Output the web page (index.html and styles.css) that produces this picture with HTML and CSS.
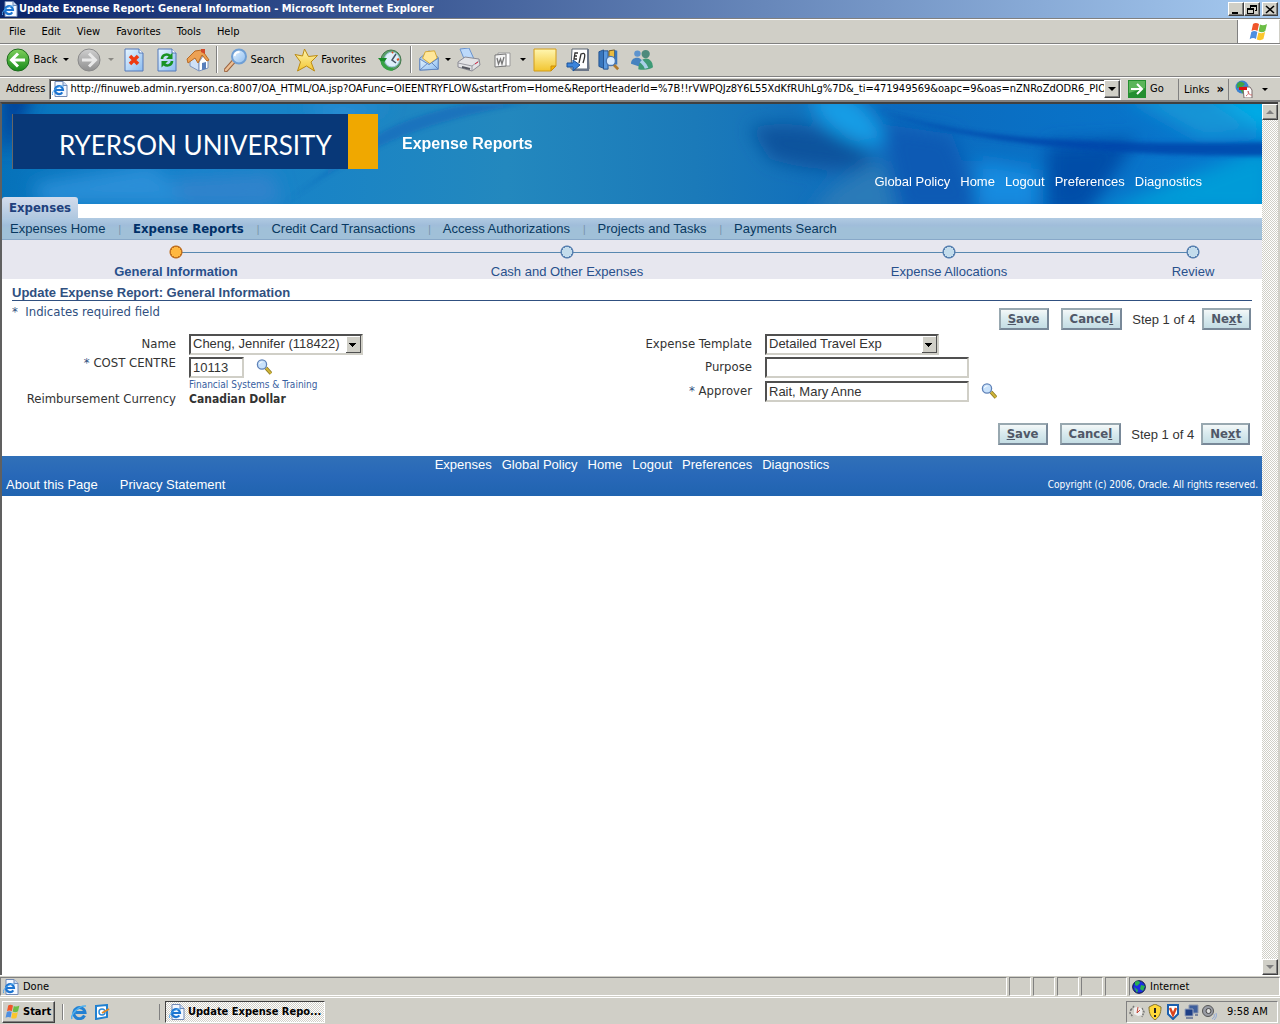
FILE: index.html
```html
<!DOCTYPE html>
<html lang="en">
<head>
<meta charset="utf-8">
<title>Update Expense Report: General Information</title>
<link rel="stylesheet" href="styles.css">
</head>
<body>
<svg class="defs" aria-hidden="true">
  <defs>
    <linearGradient id="sky" x1="0" y1="0" x2="1" y2="1"><stop offset="0" stop-color="#e8f6ff"/><stop offset="1" stop-color="#8cbcf0"/></linearGradient>
    <linearGradient id="lime" x1="0" y1="0" x2="0" y2="1"><stop offset="0" stop-color="#7fd05c"/><stop offset="1" stop-color="#168a1a"/></linearGradient>
    <linearGradient id="silver" x1="0" y1="0" x2="0" y2="1"><stop offset="0" stop-color="#cfcfcf"/><stop offset="1" stop-color="#8f8f8f"/></linearGradient>
    <linearGradient id="gold" x1="0" y1="0" x2="0" y2="1"><stop offset="0" stop-color="#fff6b0"/><stop offset="1" stop-color="#f2c530"/></linearGradient>
    <symbol id="ie" viewBox="0 0 16 16"><path d="M3 .5h8l4 4v11H3z" fill="#f4f8ff" stroke="#7089b5"/><path d="M11 .5v4h4" fill="#c9daf5" stroke="#7089b5"/><path d="M10.300 11.300A4 4 0 1 1 11 9H3" fill="none" stroke="#1c74d0" stroke-width="2.200"/><path d="M.5 14C-1 10 7 4 12 5" fill="none" stroke="#4fa6ee"/></symbol>
    <symbol id="ieball" viewBox="0 0 16 16"><path d="M13.500 11.500A5.600 5.600 0 1 1 14 8.500H4.500" fill="none" stroke="#2280d2" stroke-width="3"/><path d="M1 15C-1 11 8 1 15 2" fill="none" stroke="#4fb0ee" stroke-width="1.500"/></symbol>
    <symbol id="flag" viewBox="0 0 20 20"><path d="M4 2c2-1.500 4-1.200 6 0L8.500 9C6.500 7.800 4.500 7.800 2.500 9z" fill="#f0562a"/><path d="M11 2.500c2 1 4.300 1 7-.5L16.300 9c-2.200 1.500-4.500 1.500-6.700.3z" fill="#6cbd45"/><path d="M2.300 10c2-1.300 4-1.200 6 0L7 17c-2-1.200-4-1.200-6.300.2z" fill="#4d8fe0"/><path d="M9.400 10.400c2.300 1.200 4.500 1 6.700-.3l-1.700 7c-2.200 1.500-4.300 1.400-6.600.3z" fill="#fbc62c"/></symbol>
    <symbol id="back" viewBox="0 0 24 24"><circle cx="12" cy="12" r="11" fill="url(#lime)" stroke="#1e6a1e"/><path d="M12 5.500L5.500 12l6.500 6.500M6.500 12H19" fill="none" stroke="#fff" stroke-width="3"/></symbol>
    <symbol id="forward" viewBox="0 0 24 24"><circle cx="12" cy="12" r="11" fill="url(#silver)" stroke="#8a8a8a"/><path d="M12 5.500l6.500 6.500-6.500 6.500M17.500 12H5" fill="none" stroke="#e9e9e9" stroke-width="3"/></symbol>
    <symbol id="stop" viewBox="0 0 20 24"><path d="M1 1h14l4 4v18H1z" fill="url(#sky)" stroke="#5579b8"/><path d="M15 1v4h4" fill="#fff" stroke="#5579b8"/><path d="M6 8l8 8M14 8l-8 8" stroke="#ee3a12" stroke-width="3.500"/></symbol>
    <symbol id="refresh" viewBox="0 0 20 24"><path d="M1 1h14l4 4v18H1z" fill="url(#sky)" stroke="#5579b8"/><path d="M15 1v4h4" fill="#fff" stroke="#5579b8"/><path d="M5 11c0-4 5-6 8-3M15 13c0 4-5 6-8 3" fill="none" stroke="#189222" stroke-width="2.600"/><path d="M15.500 4.500v6.500H9zM4.500 19.500V13H11z" fill="#189222"/></symbol>
    <symbol id="home" viewBox="0 0 24 24"><path d="M4 12l4-4 5 6v9l-9-5z" fill="#cfe0f6" stroke="#7d93bd"/><path d="M13 14l4-6 5 4v8l-9 3z" fill="#fff" stroke="#7d93bd"/><path d="M1 11L9 3l7-1 7 10-2 1-5-6-4 8-3-5-7 5z" fill="#eda153" stroke="#b86a24"/><path d="M15 1h4v5l-4-2z" fill="#d34a2a"/><path d="M16 15l4-1v7l-4 1z" fill="#597fbb"/></symbol>
    <symbol id="search" viewBox="0 0 24 24"><path d="M2 22l8-9" stroke="#9a6340" stroke-width="4.500" stroke-linecap="round"/><path d="M2 22l8-9" stroke="#ecbf94" stroke-width="2.500" stroke-linecap="round"/><circle cx="15" cy="8.500" r="7" fill="url(#sky)" stroke="#6f9fd4" stroke-width="2"/><path d="M10.500 8c.5-3 3-4 5-4" fill="none" stroke="#fff" stroke-width="2"/></symbol>
    <symbol id="star" viewBox="0 0 24 24"><path d="M10.500 1l4 7.500 9-1-6.500 6.500 3.500 9-8-5-9 5 3-9L1 6.500l7.500 1.500z" fill="url(#gold)" stroke="#bb8a12"/></symbol>
    <symbol id="history" viewBox="0 0 24 24"><circle cx="13" cy="12" r="10" fill="#5aa06a" stroke="#47784f"/><circle cx="14" cy="11.500" r="7.500" fill="#dff0fa" stroke="#9cc3dc"/><path d="M18 6l-4 6 4 3" fill="none" stroke="#456" stroke-width="1.500"/><path d="M0 10h9l-4 6z" fill="#148a26"/><path d="M4 13c1 6 6 9 11 8" fill="none" stroke="#36a345" stroke-width="3"/><path d="M19 12l2-1M14 5l1-1" stroke="#dd4d20" stroke-width="2"/></symbol>
    <symbol id="mail" viewBox="0 0 24 24"><path d="M2 10L12 2l10 7v13L2 23z" fill="#a9cdf4" stroke="#5f83bc"/><path d="M5 10l3-7 10-1 3 8-8 6z" fill="#ffe79a" stroke="#d5a52c"/><path d="M2 11l10 6 10-7v12L2 23z" fill="url(#sky)" stroke="#5f83bc"/><path d="M2 23l8-7M22 22l-7-7" stroke="#5f83bc"/></symbol>
    <symbol id="print" viewBox="0 0 24 24"><path d="M3 1l9-1 5 11-9 2z" fill="#bcd9fa" stroke="#6b94ce"/><path d="M1 14l7-5 14 2 1 6-8 6-14-4z" fill="#e3e3e6" stroke="#8b8b94"/><path d="M1 15l14 3 8-6M15 18v5" fill="none" stroke="#9a9aa2"/><path d="M5 19l8 2" stroke="#55575f" stroke-width="2"/><path d="M18 16l3-2" stroke="#d24" stroke-width="1"/></symbol>
    <symbol id="word" viewBox="0 0 18 18"><path d="M5 2h12v13H5z" fill="#fff" stroke="#9a9a9a"/><path d="M2 4l11-1v12l-11 1z" fill="#f5f5f5" stroke="#777"/><path d="M4 7l1.500 6L7.500 8l1.500 5 2-7" fill="none" stroke="#777" stroke-width="1.300"/></symbol>
    <symbol id="note" viewBox="0 0 24 24"><path d="M1 1h22v17l-5 5H1z" fill="url(#gold)" stroke="#d29c1a"/><path d="M23 18h-5v5z" fill="#f7b500" stroke="#c68c10"/></symbol>
    <symbol id="en" viewBox="0 0 24 24"><path d="M6 1h16l1 20H5z" fill="#fff" stroke="#5c6673"/><path d="M22 1v21H8" fill="none" stroke="#6b7688" stroke-width="2"/><path d="M12 5H9L8 11h3M9 8h2M13 15l2-9c4-2 5 0 2 9" fill="none" stroke="#333" stroke-width="1.300"/><path d="M1 15h6v-3l7 5-7 6v-4H1z" fill="#3c85dc" stroke="#1b5298"/></symbol>
    <symbol id="books" viewBox="0 0 24 24"><path d="M1 3l5-2v20l-5-2z" fill="#3776bd" stroke="#22528f"/><path d="M6 2h5v20H6z" fill="#5a9ae0" stroke="#22528f"/><path d="M12 2l6-1v17h-6z" fill="#ecbd40" stroke="#6d5520"/><path d="M18 1l3 1v15h-3z" fill="#3776bd"/><path d="M17 17l5 5" stroke="#b07a2c" stroke-width="3"/><circle cx="14" cy="13" r="5" fill="#d8ecff" stroke="#4a77b2" stroke-width="1.500"/></symbol>
    <symbol id="people" viewBox="0 0 24 24"><circle cx="7" cy="5" r="3.500" fill="#5d94ce"/><path d="M0 16c0-8 12-9 13 0l-4 3z" fill="#4682bf"/><circle cx="16" cy="5.500" r="4.500" fill="#4d8a7c"/><path d="M8 22c0-14 15-16 16-2-3 3-12 3-16 2z" fill="#3e9a76"/><path d="M11 13c2 2 5 4 6 8" stroke="#a9d0e8" stroke-width="4"/></symbol>
    <symbol id="go" viewBox="0 0 18 18"><path d="M0 0h18v18H0z" fill="#248f30"/><path d="M1 1h16v7L1 13z" fill="#5bb55a"/><path d="M9 4l5 5-5 5M13 9H3" fill="none" stroke="#fff" stroke-width="2"/></symbol>
    <symbol id="pdf" viewBox="0 0 18 18"><circle cx="7" cy="7" r="6.500" fill="#3b82d0"/><path d="M2 4c3-4 6-2 8 0l-3 3-5 1zM5 9l6 2-3 3z" fill="#3fa344"/><path d="M8 7h7l2 3v8H9z" fill="#fff" stroke="#7a6c6c"/><path d="M4 7h8v3H4z" fill="#d11"/><path d="M11 16c3-2 3-4 2-5 0 3 2 4 4 4" fill="none" stroke="#c66"/></symbol>
    <symbol id="lens" viewBox="0 0 16 16"><path d="M10 9l5 5.500" stroke="#8a7722" stroke-width="3.600"/><path d="M10 9l5 5.500" stroke="#cfb53a" stroke-width="2"/><circle cx="6" cy="5.500" r="4.600" fill="#c9e2fb" stroke="#5f82b8" stroke-width="1.300"/><path d="M3.500 5c.5-2 2-2 3-2" stroke="#fff" fill="none"/></symbol>
    <symbol id="globe" viewBox="0 0 14 14"><circle cx="7" cy="7" r="6.300" fill="#1d2ee0" stroke="#0a1238"/><path d="M3 2c3-2 5-1 5 1L5 6 3 5zM9 5l4 1-2 5-3-2zM2 7l4 3-1 3z" fill="#28b050"/></symbol>
    <symbol id="outlook" viewBox="0 0 16 16"><path d="M2 2l11-1v12l-11 2z" fill="#fff" stroke="#2080d0" stroke-width="2"/><circle cx="8" cy="8" r="3" fill="none" stroke="#2b8ada" stroke-width="1.500"/><path d="M8 9l7-4" stroke="#e48a25" stroke-width="2"/></symbol>
    <symbol id="gauge" viewBox="0 0 16 16"><path d="M2 5l-1 4 3 4M5 2l-3 4M13 4l2 4-2 5" fill="none" stroke="#777" stroke-width="1.500" stroke-dasharray="2 1"/><path d="M5 4c3-2 6-1 8 1v6l-4 1-4-2z" fill="#eee"/><path d="M8 9l1-6M8 9l3-3" stroke="#c74a3a"/></symbol>
    <symbol id="shield" viewBox="0 0 16 16"><path d="M8 0l6 3c0 7-2 10-6 13C4 13 2 10 2 3z" fill="#ffd839" stroke="#837231"/><path d="M8 4v5" stroke="#222" stroke-width="2"/><path d="M8 11v2" stroke="#222" stroke-width="2"/></symbol>
    <symbol id="vee" viewBox="0 0 16 16"><path d="M3 1h10v9l-5 5-5-5z" fill="#fff" stroke="#1b5fae" stroke-width="2"/><path d="M5 4l3 7 3-7" fill="none" stroke="#d8431d" stroke-width="2.400"/></symbol>
    <symbol id="net" viewBox="0 0 16 16"><path d="M6 1h9v8H6z" fill="#3f5f9c" stroke="#8d97ae"/><path d="M2 5h8v7H2z" fill="#1e3f86" stroke="#9aa5bd"/><path d="M3 14h7M12 11h3" stroke="#7a859e" stroke-width="2"/></symbol>
    <symbol id="speaker" viewBox="0 0 16 16"><circle cx="7" cy="7" r="5.500" fill="#999ca4" stroke="#555"/><circle cx="7.500" cy="7" r="2.500" fill="#ddd" stroke="#444"/><path d="M13 10c1 2 0 4-2 5M15 9c1 3 0 5-2 7" stroke="#8fa8d5" fill="none"/></symbol>
  </defs>
</svg>

<header class="titlebar">
  <svg class="i16"><use href="#ie"/></svg>
  <h1>Update Expense Report: General Information - Microsoft Internet Explorer</h1>
  <button class="winbtn" aria-label="Minimize"><svg viewBox="0 0 10 9"><path d="M1 7h6v2H1z"/></svg></button>
  <button class="winbtn" aria-label="Restore"><svg viewBox="0 0 10 9"><path d="M3 0h7v6H8V5h1V2H4v1H3zM0 3h7v6H0zM1 5v3h5V5z" fill-rule="evenodd"/></svg></button>
  <button class="winbtn close" aria-label="Close"><svg viewBox="0 0 10 9"><path d="M1 1l8 7M9 1L1 8" stroke="#000" stroke-width="1.600"/></svg></button>
</header>

<nav class="menubar" aria-label="Menu">
  <button>File</button><button>Edit</button><button>View</button><button>Favorites</button><button>Tools</button><button>Help</button>
  <span class="throbber"><svg><use href="#flag"/></svg></span>
</nav>

<div class="toolbar" role="toolbar">
  <button><svg class="i24"><use href="#back"/></svg>Back</button>
  <button class="caret" aria-label="Back list"></button>
  <button aria-label="Forward"><svg class="i24"><use href="#forward"/></svg></button>
  <button class="caret dim" aria-label="Forward list"></button>
  <button aria-label="Stop"><svg class="doc"><use href="#stop"/></svg></button>
  <button aria-label="Refresh"><svg class="doc"><use href="#refresh"/></svg></button>
  <button aria-label="Home"><svg class="i24"><use href="#home"/></svg></button>
  <span class="sep"></span>
  <button><svg class="i24"><use href="#search"/></svg>Search</button>
  <button><svg class="i24"><use href="#star"/></svg>Favorites</button>
  <button aria-label="History"><svg class="i24"><use href="#history"/></svg></button>
  <span class="sep"></span>
  <button aria-label="Mail"><svg class="i22"><use href="#mail"/></svg></button>
  <button class="caret" aria-label="Mail list"></button>
  <button aria-label="Print"><svg class="i24"><use href="#print"/></svg></button>
  <button aria-label="Edit"><svg class="i18"><use href="#word"/></svg></button>
  <button class="caret" aria-label="Edit list"></button>
  <button aria-label="Notes"><svg class="i24"><use href="#note"/></svg></button>
  <button aria-label="Translate"><svg class="i24"><use href="#en"/></svg></button>
  <button aria-label="Research"><svg class="i22"><use href="#books"/></svg></button>
  <button aria-label="Messenger"><svg class="i22"><use href="#people"/></svg></button>
</div>

<div class="addressbar">
  <label for="url">Address</label>
  <div class="urlbox">
    <svg class="i16"><use href="#ie"/></svg>
    <input id="url" type="text" value="http://finuweb.admin.ryerson.ca:8007/OA_HTML/OA.jsp?OAFunc=OIEENTRYFLOW&amp;startFrom=Home&amp;ReportHeaderId=%7B!!rVWPQJz8Y6L55XdKfRUhLg%7D&amp;_ti=471949569&amp;oapc=9&amp;oas=nZNRoZdODR6_PIO4">
    <button class="drop" aria-label="Address list"></button>
  </div>
  <button class="go"><svg class="i18"><use href="#go"/></svg>Go</button>
  <div class="links">Links <b>»</b></div>
  <div class="pdf"><svg class="i18"><use href="#pdf"/></svg><button class="caret" aria-label="PDF options"></button></div>
</div>

<div class="viewport">
  <main class="page">
    <div class="banner">
      <svg class="art" viewBox="0 0 1260 100" preserveAspectRatio="none" aria-hidden="true">
        <defs>
          <linearGradient id="sea"><stop offset="0" stop-color="#0672ba"/><stop offset=".15" stop-color="#1381cb"/><stop offset=".4" stop-color="#2388be"/><stop offset=".55" stop-color="#1b7ab9"/><stop offset=".7" stop-color="#0c6abd"/><stop offset="1" stop-color="#0679d0"/></linearGradient>
          <filter id="soft" x="-30%" y="-50%" width="160%" height="200%"><feGaussianBlur stdDeviation="9"/></filter>
          <filter id="fine" x="-10%" y="-30%" width="120%" height="160%"><feGaussianBlur stdDeviation="2"/></filter>
        </defs>
        <path d="M0 0h1260v100H0z" fill="url(#sea)"/>
        <g filter="url(#soft)">
          <path d="M0 -20h34L8 46H0z" fill="#003f98"/>
          <path d="M300 0h90l-50 20zM30 80l120-20 40 40H40z" fill="#2a8fd8"/>
          <path d="M170 75l100-5 10 30H180z" fill="#3383cc"/>
          <path d="M748 24c40-10 90 0 120 26 10 22-60 18-100 5z" fill="#0f539d"/>
          <path d="M806 -10h40c24 14 38 36 34 52-34 0-66-20-74-52z" fill="#129de6"/>
          <path d="M830 84l50-30 16 60h-90z" fill="#2a7ab8"/>
          <path d="M880 20l70 10 30 80h-80z" fill="#0a5ab4"/>
          <path d="M975 56l60 10v40h-60z" fill="#128be0"/>
          <path d="M1045 40l90-5-50 75h-40z" fill="#064ea8"/>
          <path d="M1120 -10h140v40l-60 5z" fill="#1594d6"/>
          <path d="M1205 -10h70v46z" fill="#00ace6"/>
          <path d="M1090 110l90-36 90-34v70z" fill="#009bd8"/>
        </g>
        <g filter="url(#fine)">
          <path d="M275 104c60-40 120-85 250-104h-60c-100 20-110 50-190 104z" fill="#125fba" opacity=".5"/>
          <path d="M876 6c80 26 180 36 394 32v14c-150 0-300-10-394-46z" fill="#0046aa" opacity=".85"/>
        </g>
      </svg>
      <div class="logo"><span>RYERSON UNIVERSITY</span></div>
      <h2>Expense Reports</h2>
      <nav class="global" aria-label="Global">
        <a href="#">Global Policy</a><a href="#">Home</a><a href="#">Logout</a><a href="#">Preferences</a><a href="#">Diagnostics</a>
      </nav>
    </div>
    <div class="tabs"><a href="#">Expenses</a></div>
    <nav class="subtabs" aria-label="Expenses">
      <a href="#">Expenses Home</a><a href="#" class="on">Expense Reports</a><a href="#">Credit Card Transactions</a><a href="#">Access Authorizations</a><a href="#">Projects and Tasks</a><a href="#">Payments Search</a>
    </nav>
    <ol class="train">
      <li class="on">General Information</li><li>Cash and Other Expenses</li><li>Expense Allocations</li><li>Review</li>
    </ol>
    <form>
      <h3>Update Expense Report: General Information</h3>
      <div class="row">
        <p class="required">*&nbsp; Indicates required field</p>
        <div class="actions">
          <button type="button"><u>S</u>ave</button><button type="button">Cance<u>l</u></button><span>Step 1 of 4</span><button type="button">Ne<u>x</u>t</button>
        </div>
      </div>
      <div class="fields">
        <div class="col left">
          <label for="name">Name</label>
          <div><select id="name"><option>Cheng, Jennifer (118422)</option></select></div>
          <label for="cc" class="high"><i>*</i> COST CENTRE</label>
          <div><input id="cc" class="short" type="text" value="10113"><button type="button" class="lov" aria-label="Search cost centre"><svg class="i16"><use href="#lens"/></svg></button></div>
          <p class="hint">Financial Systems &amp; Training</p>
          <span class="label">Reimbursement Currency</span>
          <strong>Canadian Dollar</strong>
        </div>
        <div class="col right">
          <label for="tpl">Expense Template</label>
          <div><select id="tpl"><option>Detailed Travel Exp</option></select></div>
          <label for="purpose">Purpose</label>
          <div><input id="purpose" type="text"></div>
          <label for="appr"><i>*</i> Approver</label>
          <div><input id="appr" type="text" value="Rait, Mary Anne"><button type="button" class="lov" aria-label="Search approver"><svg class="i16"><use href="#lens"/></svg></button></div>
        </div>
      </div>
      <div class="actions bottom">
        <button type="button"><u>S</u>ave</button><button type="button">Cance<u>l</u></button><span>Step 1 of 4</span><button type="button">Ne<u>x</u>t</button>
      </div>
    </form>
    <footer>
      <nav aria-label="Footer"><a href="#">Expenses</a><a href="#">Global Policy</a><a href="#">Home</a><a href="#">Logout</a><a href="#">Preferences</a><a href="#">Diagnostics</a></nav>
      <div class="legal"><a href="#">About this Page</a><a href="#">Privacy Statement</a><small>Copyright (c) 2006, Oracle. All rights reserved.</small></div>
    </footer>
  </main>
  <div class="scrollbar"><button aria-label="Scroll up" class="up"></button><button aria-label="Scroll down" class="down"></button></div>
</div>

<div class="status">
  <div class="pane grow"><svg class="i16"><use href="#ie"/></svg>Done</div>
  <div class="pane"></div><div class="pane"></div><div class="pane"></div><div class="pane"></div><div class="pane"></div>
  <div class="pane zone"><svg class="i14"><use href="#globe"/></svg>Internet</div>
</div>

<div class="taskbar">
  <button class="start"><svg class="i16"><use href="#flag"/></svg>Start</button>
  <div class="quick">
    <a href="#" aria-label="Internet Explorer"><svg class="i16"><use href="#ieball"/></svg></a>
    <a href="#" aria-label="Outlook"><svg class="i16"><use href="#outlook"/></svg></a>
  </div>
  <button class="task"><svg class="i16"><use href="#ie"/></svg>Update Expense Repo...</button>
  <div class="tray">
    <svg class="i16"><use href="#gauge"/></svg><svg class="i16"><use href="#shield"/></svg><svg class="i16"><use href="#vee"/></svg><svg class="i16"><use href="#net"/></svg><svg class="i16"><use href="#speaker"/></svg>
    <time>9:58 AM</time>
  </div>
</div>
</body>
</html>
```
FILE: styles.css
```css
* { box-sizing: border-box; }

body {
  margin: 0;
  min-height: 100vh;
  display: flex;
  flex-direction: column;
  background: #d0cfc7;
  color: #000;
  font: 11px/14px "DejaVu Sans Condensed", "DejaVu Sans", sans-serif;
}

h1, h2, h3, p, ol { margin: 0; padding: 0; font-size: inherit; }
button { margin: 0; padding: 0; border: 0; background: none; font: inherit; color: inherit; }
a { color: inherit; text-decoration: none; }
svg { flex: none; display: block; }

.defs { position: absolute; width: 0; height: 0; }
.i14 { width: 14px; height: 14px; }
.i16 { width: 16px; height: 16px; }
.i18 { width: 18px; height: 18px; }
.i22 { width: 22px; height: 22px; }
.i24 { width: 24px; height: 24px; }
.doc { width: 20px; height: 24px; }

.caret::before, .drop::before {
  content: "";
  display: block;
  border: 3px solid transparent;
  border-top-color: #000;
  border-bottom: 0;
}
.drop::before { border-width: 4px 4px 0; }
.caret.dim::before { border-top-color: #8a8984; }

/* Window frame */
.titlebar {
  display: flex;
  align-items: center;
  height: 18px;
  padding: 0 2px;
  background: linear-gradient(90deg, #0a246a, #a6caf0);
  color: #fff;
}
.titlebar h1 { flex: 1; margin-left: 1px; font-weight: bold; }
.winbtn, .drop, .up, .down {
  display: flex;
  align-items: center;
  justify-content: center;
  width: 16px;
  height: 14px;
  background: #d0cfc7;
  border: 1px solid;
  border-color: #fff #404040 #404040 #fff;
  box-shadow: inset -1px -1px #808080;
}
.winbtn svg { width: 10px; height: 9px; }
.close { margin-left: 2px; }

.menubar {
  display: flex;
  align-items: center;
  height: 26px;
  padding-left: 9px;
  gap: 16px;
  border-top: 1px solid #808080;
  border-bottom: 1px solid #808080;
  box-shadow: inset 0 1px #fff;
}
.menubar button { padding-top: 2px; }
.throbber {
  display: flex;
  align-items: center;
  justify-content: center;
  align-self: stretch;
  width: 42px;
  margin: 1px 1px 0 auto;
  background: #fff;
  border-left: 1px solid #808080;
}
.throbber svg { width: 20px; height: 20px; }

.toolbar {
  display: grid;
  grid-template-columns: 56px 12px 34px 10px 36px 30px 32px 6px 68px 84px 36px 6px 30px 8px 34px 32px 10px 34px 32px 30px 36px;
  height: 33px;
  padding: 0 0 2px 4px;
  border-top: 1px solid #fff;
  border-bottom: 1px solid #808080;
}
.toolbar button { display: flex; align-items: center; justify-content: center; gap: 3px; }
.sep { width: 2px; margin: 1px auto; border-left: 1px solid #808080; border-right: 1px solid #fff; }

.addressbar {
  display: flex;
  align-items: center;
  height: 25px;
  padding-left: 6px;
  border-top: 1px solid #fff;
  border-bottom: 2px solid #808080;
}
.urlbox {
  flex: 1;
  min-width: 0;
  display: flex;
  align-items: center;
  height: 21px;
  margin-left: 4px;
  padding-left: 2px;
  background: #fff;
  border: 1px solid;
  border-color: #808080 #fff #fff #808080;
  box-shadow: inset 1px 1px #404040;
}
.urlbox input { flex: 1; min-width: 0; padding: 0 0 0 2px; border: 0; outline: 0; background: none; font: inherit; }
.drop { height: 18px; }
.go { display: flex; align-items: center; gap: 4px; width: 51px; height: 21px; margin-left: 7px; border-right: 1px solid #808080; }
.links { width: 44px; margin-left: 5px; white-space: nowrap; }
.links b { margin-left: 4px; font-size: 13px; }
.pdf { display: flex; align-items: center; gap: 9px; width: 52px; height: 21px; padding-left: 6px; border-left: 1px solid #808080; }

/* Browser viewport */
.viewport {
  flex: 1;
  display: flex;
  margin-right: 2px;
  border-top: 2px solid #404040;
  border-left: 2px solid #606060;
  background: #fff;
}
.page { flex: 1; min-width: 0; overflow: hidden; font: 13px/16px "Liberation Sans", Arial, sans-serif; }
.scrollbar {
  display: flex;
  flex-direction: column;
  justify-content: space-between;
  width: 16px;
  background: conic-gradient(#fff 25%, #d0cfc7 0 50%, #fff 0 75%, #d0cfc7 0) 0 0 / 2px 2px;
}
.up, .down { height: 16px; }
.up::before, .down::before { content: ""; border: 4px solid transparent; }
.up::before { border-top: 0; border-bottom-color: #808080; }
.down::before { border-bottom: 0; border-top-color: #808080; }

/* Banner */
.banner { position: relative; display: flex; height: 100px; padding: 10px 60px 0 10px; color: #fff; }
.art { position: absolute; inset: 0; width: 100%; height: 100%; }
.logo {
  position: relative;
  width: 366px;
  height: 55px;
  padding: 14px 0 0 46px;
  background: #083878;
  border-right: 30px solid #f0a800;
  border-left: 1px solid #666;
  font: 26px/34px Lato, sans-serif;
  white-space: nowrap;
}
.banner h2 { position: relative; margin: 20px 0 0 24px; font-size: 16px; line-height: 20px; }
.global { position: relative; display: flex; gap: 10px; align-self: flex-end; margin: 0 0 14px auto; }

.tabs { display: flex; height: 14px; }
.tabs a {
  position: relative;
  height: 21px;
  margin-top: -7px;
  padding: 2px 7px 0;
  border-radius: 3px 3px 0 0;
  background: linear-gradient(#d3dcec, #b0c8e0);
  color: #20407c;
  font: bold 13px/17px "DejaVu Sans Condensed", sans-serif;
}
.subtabs {
  display: flex;
  align-items: center;
  height: 22px;
  padding-left: 8px;
  background: linear-gradient(#b0cae2, #a0bdda 35%, #a0c0d8 50%);
  border-bottom: 1px solid #88a8c8;
  color: #083860;
}
.subtabs a + a::before { content: "|"; margin: 0 12px 0 13px; color: #7791a8; font: 10px "Liberation Sans", sans-serif; }
.subtabs .on { color: #003068; font: bold 13px/16px "DejaVu Sans Condensed", sans-serif; }

/* Step train */
.train {
  display: grid;
  grid-template-columns: 348fr 434fr 330fr 148fr;
  height: 39px;
  background: #e7e7ef;
  color: #28508c;
  text-align: center;
  list-style: none;
}
.train li {
  padding-top: 24px;
  background:
    radial-gradient(circle at 50% 12px, #c3dcec 5px, #5880b0 5px 6px, transparent 7px),
    linear-gradient(#5888b0, #5888b0) 0 12px / 100% 1px no-repeat;
}
.train li:first-child {
  background:
    radial-gradient(circle at 50% 12px, #ffb840 5px, #c07020 5px 6px, transparent 7px),
    linear-gradient(#5888b0, #5888b0) 100% 12px / 50% 1px no-repeat;
}
.train li:last-child {
  margin-right: -10px;
  background:
    radial-gradient(circle at 50% 12px, #c3dcec 5px, #5880b0 5px 6px, transparent 7px),
    linear-gradient(#5888b0, #5888b0) 0 12px / 50% 1px no-repeat;
}
.train .on { font-weight: bold; }

/* Form */
form { color: #333; }
h3 { margin: 0 10px; padding: 6px 0 0; border-bottom: 1px solid #305080; color: #305080; line-height: 15px; }
.row { display: flex; justify-content: space-between; padding: 2px 11px 0 10px; }
.required { color: #305080; font: 13px/18px "DejaVu Sans Condensed", sans-serif; }
.actions { display: flex; align-items: center; height: 22px; margin-top: 5px; font: 13px/16px "Liberation Sans", sans-serif; }
.actions button {
  height: 22px;
  padding: 0 7px;
  border: 2px solid;
  border-color: #98a8b0 #788898 #788898 #98a8b0;
  background: linear-gradient(#f4f8f8, #dcecf0 40%, #c4dde4);
  color: #505868;
  font: bold 13px/16px "DejaVu Sans Condensed", sans-serif;
}
.actions button + button { margin-left: 12px; }
.actions span { margin: 1px 7px 0 10px; }
.bottom { justify-content: flex-end; margin: 16px 12px 11px; }

.fields { display: grid; grid-template-columns: 576fr 684fr; padding-top: 3px; font: 13px/16px "DejaVu Sans Condensed", sans-serif; }
.col { display: grid; grid-template-columns: 174px 1fr; column-gap: 13px; align-content: start; align-items: center; }
.left { grid-template-rows: 22px 24px 12px 16px; }
.right { grid-template-rows: 22px 24px 24px; }
.col > div { display: flex; align-items: center; }
.col label, .label { text-align: right; }
.col .high { align-self: start; }
.col i { color: #305080; font-style: normal; }
.fields input, .fields select {
  width: 204px;
  height: 21px;
  padding: 0 2px;
  border: 2px solid;
  border-color: #505050 #d0cfc7 #d0cfc7 #505050;
  border-radius: 0;
  outline: 0;
  background: #fff;
  color: #333;
  font: 13px/16px "Liberation Sans", sans-serif;
}
.fields select {
  width: 174px;
  appearance: none;
  background:
    conic-gradient(from 315deg at 50% 100%, #000 90deg, transparent 0) right 5px top 7px / 7px 4px no-repeat,
    linear-gradient(#d0cfc7, #d0cfc7) right 1px top 1px / 13px 15px no-repeat,
    linear-gradient(#fff, #fff) right 1px top 0 / 14px 16px no-repeat,
    linear-gradient(#505050, #505050) right 0 top 0 / 15px 17px no-repeat,
    #fff;
}
.fields .short { width: 55px; }
.lov { margin-left: 12px; }
.hint { grid-column: 2; color: #3860a0; font: 10px/12px "DejaVu Sans Condensed", sans-serif; }
.col strong { font-size: 12px; }

footer { height: 40px; padding: 1px 4px 0; background: linear-gradient(#3070b8, #2868b8 50%, #2064b0); color: #fff; }
footer nav { display: flex; justify-content: center; gap: 10px; }
.legal { display: flex; align-items: center; gap: 22px; margin-top: 4px; }
.legal small { margin-left: auto; font: 10px/16px "DejaVu Sans Condensed", sans-serif; }

/* Status bar and taskbar */
.status { display: flex; gap: 2px; height: 22px; padding-top: 1px; border-top: 1px solid #fff; }
.pane {
  display: flex;
  align-items: center;
  gap: 4px;
  width: 22px;
  height: 19px;
  padding-left: 2px;
  border: 1px solid;
  border-color: #808080 #fff #fff #808080;
}
.grow { flex: 1; }
.zone { width: 151px; }
.taskbar { display: flex; align-items: center; height: 27px; padding: 1px 2px 0; border-top: 1px solid #fff; }
.start {
  display: flex;
  align-items: center;
  gap: 2px;
  width: 53px;
  height: 22px;
  padding-left: 2px;
  border: 1px solid;
  border-color: #fff #404040 #404040 #fff;
  box-shadow: inset -1px -1px #808080;
  font-weight: bold;
}
.quick {
  display: flex;
  gap: 7px;
  width: 98px;
  margin: 0 5px 0 7px;
  padding-left: 8px;
  border: solid #808080;
  border-width: 0 1px;
  box-shadow: inset 1px 0 #fff;
}
.task {
  display: flex;
  align-items: center;
  gap: 3px;
  width: 160px;
  height: 22px;
  padding-left: 3px;
  border: 1px solid;
  border-color: #404040 #fff #fff #404040;
  background: conic-gradient(#fff 25%, #d0cfc7 0 50%, #fff 0 75%, #d0cfc7 0) 0 0 / 2px 2px;
  font-weight: bold;
  white-space: nowrap;
}
.tray {
  display: flex;
  align-items: center;
  gap: 2px;
  width: 152px;
  height: 22px;
  margin-left: auto;
  padding-left: 2px;
  border: 1px solid;
  border-color: #808080 #fff #fff #808080;
}
.tray time { margin-left: 8px; white-space: nowrap; }
```
